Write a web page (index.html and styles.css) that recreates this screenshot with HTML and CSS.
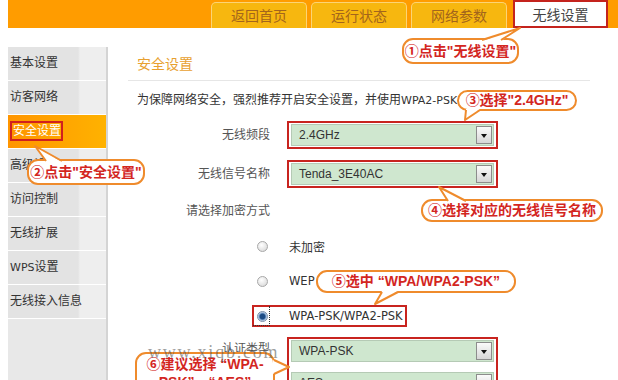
FILE: index.html
```html
<!DOCTYPE html>
<html lang="zh-CN">
<head>
    <meta charset="UTF-8">
    <title>无线设置 - 安全设置</title>
    <link rel="stylesheet" href="styles.css">
</head>
<body>
    <div class="page">
        <div class="topbar">
            <a class="tab">返回首页</a>
            <a class="tab">运行状态</a>
            <a class="tab">网络参数</a>
            <a class="tab active">无线设置</a>
        </div>

        <div class="main">
            <ul class="sidebar">
                <li>基本设置</li>
                <li>访客网络</li>
                <li class="active"><span class="mark">安全设置</span></li>
                <li>高级设置</li>
                <li>访问控制</li>
                <li>无线扩展</li>
                <li><span class="lat">WPS</span>设置</li>
                <li>无线接入信息</li>
            </ul>

            <div class="content">
                <h2>安全设置</h2>
                <p class="note">为保障网络安全，强烈推荐开启安全设置，并使用<span class="lat">WPA2-PSK AES</span>加密方式。</p>

                <div class="row">
                    <label>无线频段</label>
                    <div class="hl">
                        <div class="select">2.4GHz<span class="arrow"></span></div>
                    </div>
                </div>
                <div class="row">
                    <label>无线信号名称</label>
                    <div class="hl">
                        <div class="select">Tenda_3E40AC<span class="arrow"></span></div>
                    </div>
                </div>
                <div class="row plain">
                    <label>请选择加密方式</label>
                </div>

                <div class="radio-row">
                    <div class="opt"><span class="rb"></span>未加密</div>
                </div>
                <div class="radio-row">
                    <div class="opt"><span class="rb"></span><span class="lat">WEP</span></div>
                </div>
                <div class="radio-row">
                    <div class="opt on"><span class="rb"></span><span class="lat">WPA-PSK/WPA2-PSK</span></div>
                </div>

                <div class="row group">
                    <label>认证类型</label>
                    <div class="hl">
                        <div class="select">WPA-PSK<span class="arrow"></span></div>
                        <div class="select">AES<span class="arrow"></span></div>
                    </div>
                </div>
            </div>
        </div>

        <!-- step callouts -->
        <div class="callout c1">①点击"无线设置"</div>
        <div class="callout c2">②点击"安全设置"</div>
        <div class="callout c3">③选择"2.4GHz"</div>
        <div class="callout c4">④选择对应的无线信号名称</div>
        <div class="callout c5">⑤选中 “WPA/WPA2-PSK”</div>
        <div class="callout c6">⑥建议选择 “WPA-<br>PSK”、“AES”</div>

        <svg class="tails" width="618" height="380" viewBox="0 0 618 380">
            <polygon points="482,41 501,41 520,28" fill="#fff"/>
            <polyline points="482,40 520,28 501,40" />
            <polygon points="46,162 62,162 35,146" fill="#fff"/>
            <polyline points="46,161 35,146 62,161" />
            <polygon points="466,109 480,109 465,120" fill="#fff"/>
            <polyline points="466,110 465,120 480,110" />
            <polygon points="448,202 466,202 439,187" fill="#fff"/>
            <polyline points="448,201 439,187 466,201" />
            <polygon points="382,291 398,291 375,304" fill="#fff"/>
            <polyline points="382,292 375,304 398,292" />
            <polygon points="273,360 273,374 289,367" fill="#fff"/>
            <polyline points="274,360 289,367 274,374" />
        </svg>

        <div class="watermark">www.xiqb.com</div>
    </div>
</body>
</html>
```

FILE: styles.css
```css
* { margin: 0; padding: 0; box-sizing: border-box; }
body { font-family: "DejaVu Sans", "Noto Sans CJK SC", sans-serif; font-size: 12px; color: #333; background: #fff; }
.page { position: relative; width: 618px; height: 380px; overflow: hidden; padding-left: 8px; }
.lat { font-size: 11px; }

/* top navigation */
.topbar { height: 28px; background: #ff9c00; display: flex; align-items: flex-end; gap: 4px; padding-left: 203px; }
.tab { width: 96px; height: 26px; line-height: 25px; text-align: center; font-family: "Noto Sans CJK SC", sans-serif; font-size: 14px; color: #a3651c; background: #f7b70f; border: 1px solid #fcd475; border-bottom: none; border-radius: 5px 5px 0 0; }
.tab.active { width: 95px; height: 28px; margin-left: 2px; line-height: 24px; background: #fff; border: 2px solid #c4231d; border-radius: 0; color: #444; }

/* layout */
.main { display: flex; margin-top: 19px; height: 333px; }
.sidebar { width: 100px; list-style: none; background: #e8e8e8; border-right: 2px solid #d4d4d4; }
.sidebar li { height: 34px; line-height: 33px; padding-left: 2px; border-bottom: 1px solid #fff; background: linear-gradient(to right, #e3e3e3 0, #e3e3e3 70px, #eeeeee 72px); white-space: nowrap; }
.sidebar li.active { background: linear-gradient(to right, #ff9500, #ffb200); color: #fff; }
.sidebar .mark { border: 2px solid #d0201f; padding: 1px 0 1px 1px; }

.content { margin-left: 20px; width: 462px; }
.content h2 { font-family: "Noto Sans CJK SC", sans-serif; font-size: 14px; font-weight: normal; color: #e8a030; line-height: 20px; padding: 6px 0 7px 9px; border-bottom: 1px solid #e6e6e6; }
.note { margin-top: 10px; padding-left: 9px; line-height: 18px; white-space: nowrap; }

/* form rows */
.row { display: flex; align-items: center; margin-top: 11px; }
.row label { width: 142px; text-align: right; color: #555; line-height: 18px; }
.row.plain { height: 24px; }
.row.group { align-items: flex-start; margin-top: 9px; }
.row.group label { margin-top: 3px; }
.hl { border: 2px solid #c8241f; padding: 1px 2px; margin-left: 17px; display: flex; flex-direction: column; gap: 10px; }
.select { width: 203px; height: 22px; display: flex; align-items: center; padding-left: 7px; background: #cfe7cf; border: 1px solid #b5cab5; font-family: "Liberation Sans", sans-serif; font-size: 12px; color: #333; }
.arrow { position: relative; margin-left: auto; margin-right: 1px; width: 16px; height: 18px; border: 1px solid #8c8c8c; background: linear-gradient(#fbfbfb, #d6d6d6); }
.arrow::after { content: ''; position: absolute; left: 4px; top: 7px; border-left: 3.5px solid transparent; border-right: 3.5px solid transparent; border-top: 4px solid #111; }

/* radios */
.radio-row { height: 24px; margin-top: 11px; padding-left: 124px; display: flex; align-items: center; }
.opt { position: relative; display: flex; align-items: center; height: 22px; border: 2px solid transparent; padding: 0 2px 0 3px; white-space: nowrap; }
.opt .lat { font-size: 11.5px; }
.opt.on { border-color: #c8241f; }
.opt.on::before { content: ''; position: absolute; left: -1px; top: -1px; width: 16px; bottom: -1px; border-right: 1px dotted #333; border-bottom: 1px dotted #333; }
.rb { width: 11px; height: 11px; margin-right: 21px; border-radius: 50%; border: 1px solid #a8a8a8; background: radial-gradient(circle at 40% 35%, #fff, #d3d3d3); }
.opt.on .rb { border-color: #7a8ea8; background: radial-gradient(circle, #1d4c85 0, #1d4c85 2.5px, #7ea4d0 3.5px, #eef2f7 5px); }

/* callouts */
.callout { position: absolute; z-index: 2; background: #fff; border: 2px solid #ef8b2c; border-radius: 11px; color: #d3261f; font-weight: bold; font-size: 14px; font-family: "Liberation Sans", "Noto Sans CJK SC", sans-serif; text-align: center; white-space: nowrap; }
.c1 { left: 402px; top: 38px; width: 117px; height: 26px; line-height: 22px; }
.c2 { left: 27px; top: 159px; width: 118px; height: 26px; line-height: 22px; }
.c3 { left: 457px; top: 90px; width: 120px; height: 21px; line-height: 17px; }
.c4 { left: 421px; top: 199px; width: 182px; height: 23px; line-height: 19px; }
.c5 { left: 316px; top: 270px; width: 200px; height: 23px; line-height: 19px; }
.c6 { left: 135px; top: 352px; width: 140px; height: 50px; line-height: 18px; padding-top: 1px; }
.tails { position: absolute; left: 0; top: 0; z-index: 3; pointer-events: none; }
.tails polyline { fill: none; stroke: #ef8b2c; stroke-width: 2; stroke-linejoin: round; }
.watermark { position: absolute; z-index: 4; left: 148px; top: 342px; font-family: "Liberation Serif", serif; font-size: 18px; letter-spacing: 1.8px; color: rgba(90, 90, 90, 0.6); }
```
